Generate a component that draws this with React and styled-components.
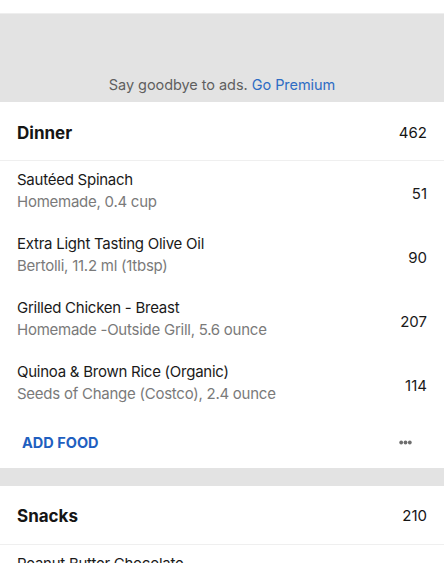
import React from "react";
import styled, { createGlobalStyle } from "styled-components";

const GlobalStyle = createGlobalStyle`
  *, *::before, *::after {
    box-sizing: border-box;
  }
  body {
    margin: 0;
    background: #fff;
    font-family: Inter, "Noto Sans", sans-serif;
    -webkit-font-smoothing: antialiased;
  }
`;

const dinner = [
  { name: "Sautéed Spinach", info: "Homemade, 0.4 cup", kcal: 51 },
  { name: "Extra Light Tasting Olive Oil", info: "Bertolli, 11.2 ml (1tbsp)", kcal: 90 },
  { name: "Grilled Chicken - Breast", info: "Homemade -Outside Grill, 5.6 ounce", kcal: 207 },
  { name: "Quinoa & Brown Rice (Organic)", info: "Seeds of Change (Costco), 2.4 ounce", kcal: 114 },
];

function MoreIcon() {
  return (
    <svg width="13" height="5" viewBox="0 0 13 5">
      <circle cx="2.2" cy="2.5" r="1.9" fill="#6e6e6e" />
      <circle cx="6.5" cy="2.5" r="1.9" fill="#6e6e6e" />
      <circle cx="10.8" cy="2.5" r="1.9" fill="#6e6e6e" />
    </svg>
  );
}

export default function App() {
  return (
    <>
      <GlobalStyle />
      <Page>
        <TopStrip />

        {/* ad banner */}
        <AdBanner>
          <AdText>
            Say goodbye to ads. <PremiumLink>Go Premium</PremiumLink>
          </AdText>
        </AdBanner>

        <Section>
          <Header $first>
            <Title>Dinner</Title>
            <Total>462</Total>
          </Header>
          {dinner.map((item) => (
            <FoodRow key={item.name}>
              <FoodText>
                <FoodName>{item.name}</FoodName>
                <FoodInfo>{item.info}</FoodInfo>
              </FoodText>
              <Kcal>{item.kcal}</Kcal>
            </FoodRow>
          ))}
          <Footer>
            <AddFood>ADD FOOD</AddFood>
            <More>
              <MoreIcon />
            </More>
          </Footer>
        </Section>

        <Gap />

        <Section>
          <Header>
            <Title>Snacks</Title>
            <Total>210</Total>
          </Header>
          <FoodRow>
            <FoodText>
              <FoodName>Peanut Butter Chocolate</FoodName>
              <FoodInfo>&nbsp;</FoodInfo>
            </FoodText>
          </FoodRow>
        </Section>
      </Page>
    </>
  );
}

const Page = styled.div`
  width: 444px;
  height: 563px;
  overflow: hidden;
  background: #fff;
`;

const TopStrip = styled.div`
  height: 14px;
  border-bottom: 1px solid #eeeeee;
  background: #fff;
`;

const AdBanner = styled.div`
  height: 88px;
  background: #e3e3e3;
  display: flex;
  align-items: flex-end;
  justify-content: center;
`;

const AdText = styled.p`
  margin: 0 0 9px;
  font-size: 14.5px;
  color: #5f5f5f;
  letter-spacing: -0.05px;
`;

const PremiumLink = styled.span`
  color: #2e6cc4;
`;

const Section = styled.section`
  background: #fff;
`;

const Header = styled.div`
  height: 59px;
  padding: ${({ $first }) => ($first ? "3px 17px 0" : "1px 17px 0")};
  display: flex;
  align-items: center;
  justify-content: space-between;
  border-bottom: 1px solid #efefef;
`;

const Title = styled.h2`
  margin: 0;
  font-size: 17px;
  font-weight: 700;
  color: #151515;
`;

const Total = styled.span`
  font-size: 15px;
  color: #151515;
`;

const FoodRow = styled.div`
  height: 64px;
  padding: 0 17px;
  display: flex;
  align-items: center;
  justify-content: space-between;
`;

const FoodText = styled.div`
  margin-top: -4px;
`;

const FoodName = styled.div`
  font-size: 15px;
  letter-spacing: -0.25px;
  color: #1a1a1a;
  line-height: 22px;
`;

const FoodInfo = styled.div`
  font-size: 15px;
  letter-spacing: -0.25px;
  color: #7a7a7a;
  line-height: 22px;
`;

const Kcal = styled.span`
  font-size: 15px;
  color: #1a1a1a;
`;

const Footer = styled.div`
  height: 51px;
  padding: 0 32px 0 22px;
  display: flex;
  align-items: center;
  justify-content: space-between;
`;

const AddFood = styled.span`
  font-size: 14.5px;
  font-weight: 700;
  color: #1f5fc0;
`;

const More = styled.span`
  display: flex;
  align-items: center;
`;

const Gap = styled.div`
  height: 18px;
  background: #e3e3e3;
`;
